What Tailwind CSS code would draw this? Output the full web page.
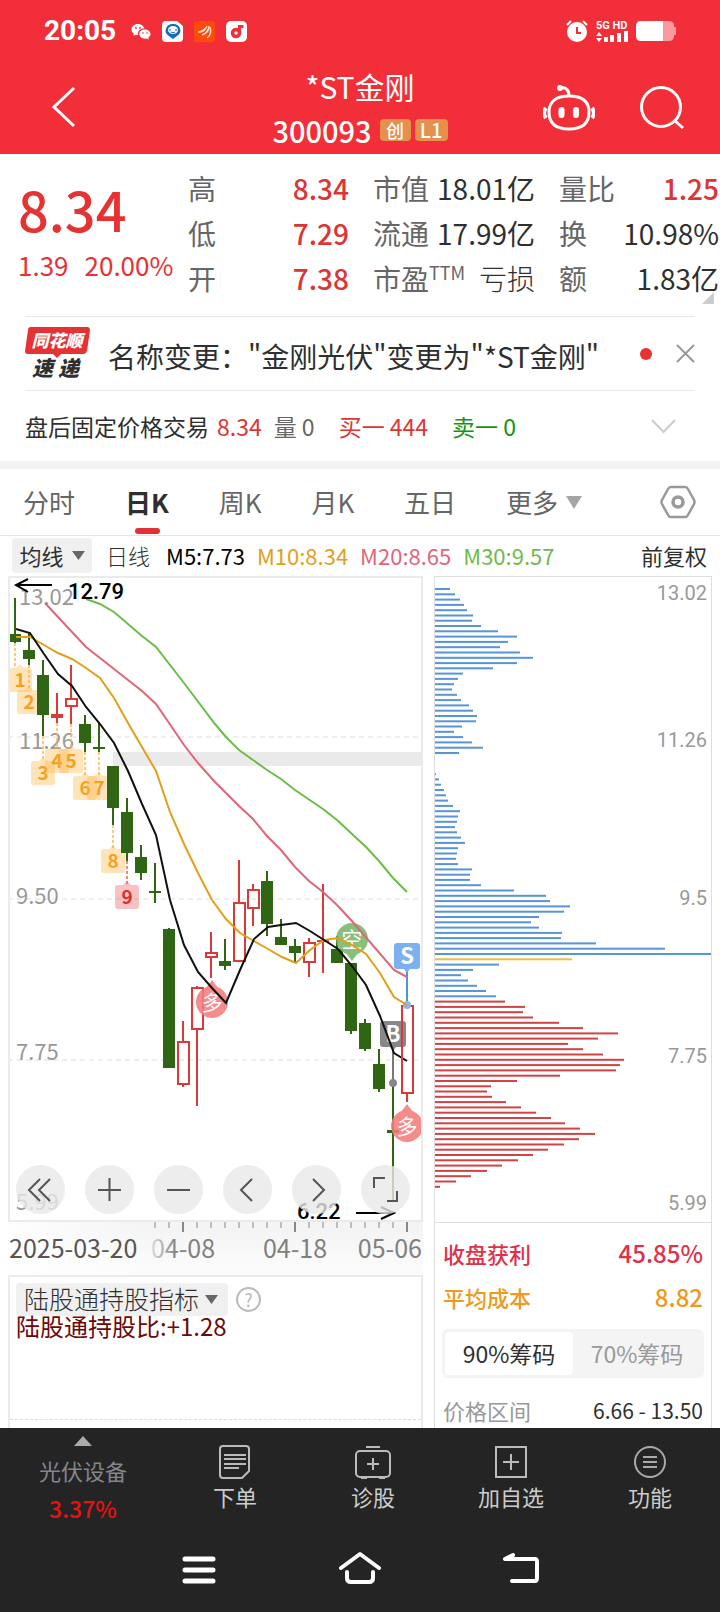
<!DOCTYPE html>
<html lang="zh-CN">

<head>
    <meta charset="UTF-8">
    <meta name="viewport" content="width=device-width, initial-scale=1.0">
    <title>*ST金刚 300093</title>
    <script src="https://cdn.jsdelivr.net/npm/@tailwindcss/browser@4"></script>
</head>

<body class="min-h-screen flex flex-col bg-white text-[#2f2f2f] font-['Noto_Sans_CJK_SC','Noto_Sans',sans-serif]">

    <!-- header -->
    <header class="bg-[#f22f38] text-white">
        <div class="flex items-center justify-between h-[62px] pl-11 pr-11">
            <div class="flex items-center gap-[11px]">
                <span class="text-[28px]/[32px] font-bold font-[Roboto,sans-serif] mr-1">20:05</span>
                <svg class="w-5 h-5" viewBox="0 0 20 20" fill="#fff">
                    <path d="M7 3C3 3 .5 5.500.5 8.500c0 1.800.9 3.200 2.300 4.200L2.300 15l2.400-1.300c.8.200 1.500.3 2.300.3-.8-4 2.700-6.600 6.400-6.400C12.700 5 10 3 7 3z" />
                    <path d="M14 8.500c-3.400 0-5.700 2-5.700 4.600s2.400 4.600 5.700 4.600c.7 0 1.300-.1 1.900-.3l1.900 1-.5-1.700c1.400-.9 2.200-2.200 2.200-3.600 0-2.600-2.500-4.600-5.500-4.600z" />
                    <g fill="#f22f38">
                        <circle cx="5" cy="7" r=".9" />
                        <circle cx="9" cy="7" r=".9" />
                        <circle cx="12" cy="12" r=".8" />
                        <circle cx="16" cy="12" r=".8" />
                    </g>
                </svg>
                <svg class="w-[21px] h-[21px]" viewBox="0 0 21 21">
                    <rect width="21" height="21" rx="4" fill="#fff" />
                    <path d="M15 0h6v5z" fill="#e33a1c" />
                    <path d="M11 3a7 6.500 0 0 0-4 12l4 3 4-3a7 6.500 0 0 0-4-12z" fill="#1269c7" />
                    <ellipse cx="11" cy="9" rx="5" ry="4" fill="#fff" />
                    <path d="M8 8v2M14 8v2M9 11q2 1.500 4 0" stroke="#1269c7" fill="none" />
                </svg>
                <svg class="w-[21px] h-[21px]" viewBox="0 0 21 21">
                    <rect width="21" height="21" rx="3" fill="#ff4b07" />
                    <path d="M4 11c4-1 7-3 9-6-1 4-4 7-9 6zm4 3c4-2 6-5 7-9 1 4-2 8-7 9zm5 3c3-3 4-6 3-11 2 4 1 9-3 11z" fill="#ffe9dc" stroke="#ffe9dc" stroke-width=".8" />
                </svg>
                <svg class="w-[21px] h-[21px]" viewBox="0 0 21 21">
                    <rect width="21" height="21" rx="5" fill="#fff" />
                    <circle cx="10" cy="12" r="3.500" fill="none" stroke="#f22f38" stroke-width="3.500" />
                    <path d="M13.500 12V5.500h4" fill="none" stroke="#f22f38" stroke-width="3" />
                </svg>
            </div>
            <div class="flex items-center gap-2">
                <svg class="w-[22px] h-[22px]" viewBox="0 0 22 22">
                    <circle cx="11" cy="12" r="10" fill="#fff" />
                    <path d="M1 5l4-4M21 5l-4-4" stroke="#fff" stroke-width="2" />
                    <path d="M11 7v6h4" fill="none" stroke="#f22f38" stroke-width="2" />
                </svg>
                <div class="flex flex-col w-8">
                    <span class="text-[11px]/[11px] font-bold font-[Roboto,sans-serif] whitespace-nowrap">5G HD</span>
                    <svg class="w-8 h-[11px]" viewBox="0 0 32 11" fill="#fff">
                        <path d="M0 5l3-4 3 4zM0 7l3 4 3-4zM8 6h4v5H8zM14 4h4v7h-4zM21 2h4v9h-4zM28 0h4v11h-4z" />
                    </svg>
                </div>
                <svg class="w-10 h-5" viewBox="0 0 40 20">
                    <path d="M27 0h6q5 0 5 5v1h2v8h-2v1q0 5-5 5h-6z" fill="#fb9a9e" />
                    <path d="M5 0h22v20H5q-5 0-5-5V5q0-5 5-5z" fill="#fff" />
                </svg>
            </div>
        </div>
        <div class="grid grid-cols-[1fr_auto_1fr] items-center h-[92px] px-9">
            <button aria-label="返回" class="justify-self-start ml-[14px]">
                <svg class="w-7 h-11" viewBox="0 0 28 44" fill="none" stroke="#fff" stroke-width="3">
                    <path d="M24 2L4 21l20 19" />
                </svg>
            </button>
            <div class="flex flex-col items-center">
                <h1 class="text-[30px]/[44px] font-normal">*ST金刚</h1>
                <div class="flex items-center gap-1 h-11 pb-px">
                    <span class="text-[29px]/[40px] font-medium mr-1">300093</span>
                    <span class="w-[31px] h-[22px] bg-[#e5904c] rounded-sm text-center text-[18px]/[22px] font-medium">创</span>
                    <span class="w-[33px] h-[22px] bg-[#e5904c] rounded-sm text-center text-[20px]/[22px] font-medium">L1</span>
                </div>
            </div>
            <div class="flex justify-end gap-[45px]">
                <button aria-label="助手">
                    <svg class="w-[52px] h-12" viewBox="0 0 52 48" fill="none" stroke="#fff" stroke-width="3">
                        <path d="M26 12c13 0 20 5 20 16 0 12-7 17-20 17S6 40 6 28c0-11 8-16 20-16z" />
                        <path d="M18 4c5-1 8 2 8 8" />
                        <circle cx="17" cy="4" r="3" fill="#fff" stroke="none" />
                        <path d="M3 24q-4 5 0 10M49 24q4 5 0 10" stroke-width="4" />
                        <path d="M18.500 26v5M33 26v5" stroke-width="6" stroke-linecap="round" />
                    </svg>
                </button>
                <button aria-label="搜索">
                    <svg class="w-11 h-11" viewBox="0 0 44 44" fill="none" stroke="#fff" stroke-width="3">
                        <circle cx="21" cy="21" r="19.500" />
                        <path d="M34 34l9 8" />
                    </svg>
                </button>
            </div>
        </div>
    </header>

    <!-- quote -->
    <section class="relative grid grid-cols-[146fr_161fr_162fr_160fr] gap-x-6 pl-[18px] pr-px pt-3 pb-[15px] text-[28px]/[45px] whitespace-nowrap">
        <div class="min-w-0 text-[#e63232]">
            <div class="text-[54px]/[86px] font-medium">8.34</div>
            <div class="flex gap-4 text-[26px]/[26px]"><span>1.39</span><span>20.00%</span></div>
        </div>
        <dl>
            <div class="flex justify-between"><dt class="text-[#666]">高</dt><dd class="font-medium text-[#dc3535]">8.34</dd></div>
            <div class="flex justify-between"><dt class="text-[#666]">低</dt><dd class="font-medium text-[#dc3535]">7.29</dd></div>
            <div class="flex justify-between"><dt class="text-[#666]">开</dt><dd class="font-medium text-[#dc3535]">7.38</dd></div>
        </dl>
        <dl>
            <div class="flex justify-between"><dt class="text-[#666]">市值</dt><dd>18.01亿</dd></div>
            <div class="flex justify-between"><dt class="text-[#666]">流通</dt><dd>17.99亿</dd></div>
            <div class="flex justify-between"><dt class="flex text-[#666]">市盈<span class="text-[18px]/[32px]">TTM</span></dt><dd class="font-light">亏损</dd></div>
        </dl>
        <dl>
            <div class="flex justify-between"><dt class="text-[#666]">量比</dt><dd class="font-medium text-[#dc3535]">1.25</dd></div>
            <div class="flex justify-between"><dt class="text-[#666]">换</dt><dd>10.98%</dd></div>
            <div class="flex justify-between"><dt class="text-[#666]">额</dt><dd>1.83亿</dd></div>
        </dl>
        <svg class="absolute right-[6px] bottom-3 w-3 h-3" viewBox="0 0 12 12">
            <path d="M12 0v12H0z" fill="#ccc" />
        </svg>
    </section>

    <!-- news -->
    <section class="flex items-center mx-[25px] h-[75px] border-y border-[#e9e9e9]">
        <svg class="w-[65px] h-[54px]" viewBox="0 0 65 54">
            <path d="M6 0h56q3 0 3 3l-3 21q-1 3-3 3H36l-4 4-4-4H3q-3 0-3-3L3 3q0-3 3-3z" fill="#e63232" />
            <text x="32" y="20" text-anchor="middle" font-size="17" font-weight="900" font-style="italic" fill="#fff">同花顺</text>
            <text x="7" y="49" font-size="21" font-weight="900" font-style="italic" fill="#2f2f2f">速</text>
            <text x="33" y="49" font-size="21" font-weight="900" font-style="italic" fill="#2f2f2f">递</text>
        </svg>
        <a href="#" class="ml-[18px] pt-1 text-[28px]/[40px] whitespace-nowrap">名称变更："金刚光伏"变更为"*ST金刚"</a>
        <span class="ml-auto w-3 h-3 rounded-full bg-[#e63232]"></span>
        <button aria-label="关闭" class="ml-6">
            <svg class="w-[19px] h-[19px]" viewBox="0 0 19 19" stroke="#999" stroke-width="2">
                <path d="M1 1l17 17M18 1L1 18" />
            </svg>
        </button>
    </section>

    <!-- after-hours trading -->
    <section class="flex items-center h-[78px] pl-[25px] pr-11 text-[23px]/[32px] border-b-8 border-[#f3f3f3] whitespace-nowrap">
        <span>盘后固定价格交易</span>
        <span class="ml-2 text-[#dc3535]">8.34</span>
        <span class="ml-3 text-[#666]">量 0</span>
        <span class="ml-6 text-[#dc3535]">买一 444</span>
        <span class="ml-6 text-[#0f960f]">卖一 0</span>
        <button aria-label="展开" class="ml-auto">
            <svg class="w-[25px] h-[15px]" viewBox="0 0 25 15" fill="none" stroke="#ccc" stroke-width="2">
                <path d="M1 1l11.500 12L24 1" />
            </svg>
        </button>
    </section>

    <!-- period tabs -->
    <nav class="flex items-center justify-between h-[67px] pl-[23px] pr-6 border-b border-[#e4e4e4] text-[26px]/[40px] text-[#666]">
        <button>分时</button>
        <button class="relative font-bold text-[#2f2f2f]">日K
            <span class="absolute left-1/2 -ml-3 -bottom-3 w-[25px] h-[6px] rounded-full bg-[#e03236]"></span>
        </button>
        <button>周K</button>
        <button>月K</button>
        <button>五日</button>
        <button class="flex items-center gap-2">更多
            <svg class="w-4 h-[13px]" viewBox="0 0 16 13">
                <path d="M0 0h16L8 13z" fill="#a5a5a5" />
            </svg>
        </button>
        <button aria-label="设置" class="ml-7">
            <svg class="w-9 h-[34px]" viewBox="0 0 36 34" fill="none" stroke="#999" stroke-width="2.500" stroke-linejoin="round">
                <path d="M11 2h14q2 0 3 2l6 11q1 2 0 4l-6 11q-1 2-3 2H11q-2 0-3-2L2 19q-1-2 0-4L8 4q1-2 3-2z" />
                <circle cx="18" cy="17" r="5" stroke-width="3.500" />
            </svg>
        </button>
    </nav>

    <!-- moving averages -->
    <div class="flex items-center h-10 pl-3 pr-[13px] pb-[2px] text-[22px]/[34px] whitespace-nowrap">
        <button class="flex items-center justify-center gap-2 w-20 h-[35px] rounded bg-[#f0f0f0]">均线
            <svg class="w-[13px] h-[9px]" viewBox="0 0 13 9">
                <path d="M0 0h13L6.500 9z" fill="#666" />
            </svg>
        </button>
        <span class="ml-[14px] font-light">日线</span>
        <span class="ml-4 text-black">M5:7.73</span>
        <span class="ml-3 text-[#e0a01c]">M10:8.34</span>
        <span class="ml-3 text-[#e0667a]">M20:8.65</span>
        <span class="ml-3 text-[#6cbc4b]">M30:9.57</span>
        <span class="ml-auto">前复权</span>
    </div>

    <main class="grow grid grid-cols-[415fr_278fr] gap-x-[11px] px-2">
        <!-- k line -->
        <div class="flex flex-col">
            <div class="relative">
                <svg id="kline" class="block w-full" viewBox="0 0 415 646" fill="none"></svg>
                <div class="absolute left-2 bottom-2 flex gap-5">
                    <button aria-label="收起" class="w-[49px] h-[49px] rounded-full bg-[#e8e8e8]/80">
                        <svg viewBox="0 0 49 49" fill="none" stroke="#555" stroke-width="2"><path d="M24 14L13 25l11 11M34 14L23 25l11 11" /></svg>
                    </button>
                    <button aria-label="放大" class="w-[49px] h-[49px] rounded-full bg-[#e8e8e8]/80">
                        <svg viewBox="0 0 49 49" fill="none" stroke="#555" stroke-width="2"><path d="M13 25h23M24.500 13v23" /></svg>
                    </button>
                    <button aria-label="缩小" class="w-[49px] h-[49px] rounded-full bg-[#e8e8e8]/80">
                        <svg viewBox="0 0 49 49" fill="none" stroke="#555" stroke-width="2"><path d="M13 25h23" /></svg>
                    </button>
                    <button aria-label="左移" class="w-[49px] h-[49px] rounded-full bg-[#e8e8e8]/80">
                        <svg viewBox="0 0 49 49" fill="none" stroke="#555" stroke-width="2"><path d="M29 14L18 25l11 11" /></svg>
                    </button>
                    <button aria-label="右移" class="w-[49px] h-[49px] rounded-full bg-[#e8e8e8]/80">
                        <svg viewBox="0 0 49 49" fill="none" stroke="#555" stroke-width="2"><path d="M21 14l11 11-11 11" /></svg>
                    </button>
                    <button aria-label="全屏" class="w-[49px] h-[49px] rounded-full bg-[#e8e8e8]/80">
                        <svg viewBox="0 0 49 49" fill="none" stroke="#555" stroke-width="2"><path d="M13 23V13h11M36 26v10H26" /></svg>
                    </button>
                </div>
            </div>
            <svg id="axis" class="block w-full" viewBox="0 0 415 53"></svg>
            <div class="grow flex flex-col border-2 border-b-0 border-[#ebebeb]">
                <div class="flex items-center gap-2 mt-[6px] ml-[6px]">
                    <button class="flex items-center gap-[6px] h-[33px] pl-2 pr-[10px] pb-1 rounded bg-[#f0f0f0] text-[25px]/[30px] font-light">陆股通持股指标
                        <svg class="w-[13px] h-[9px] mt-1" viewBox="0 0 13 9">
                            <path d="M0 0h13L6.500 9z" fill="#666" />
                        </svg>
                    </button>
                    <button class="w-[25px] h-[25px] rounded-full border-2 border-[#bbb] text-[18px]/[21px] text-[#bbb]">?</button>
                </div>
                <div class="ml-[6px] text-[24px]/[24px] -mt-[2px] text-[#6d0808]">陆股通持股比:+1.28</div>
                <div class="mt-auto mb-2 border-t border-dashed border-[#ddd]"></div>
            </div>
        </div>

        <!-- chip distribution -->
        <div class="border border-[#dedede] border-b-0 flex flex-col">
            <svg id="chips" class="block w-full" viewBox="0 0 276 645"></svg>
            <dl class="px-2 pt-2 border-t border-[#dedede] text-[22px]/[44px] font-medium">
                <div class="flex justify-between text-[#e0314a]"><dt>收盘获利</dt><dd class="text-[24px]">45.85%</dd></div>
                <div class="flex justify-between text-[#ee9a1a]"><dt>平均成本</dt><dd class="text-[24px]">8.82</dd></div>
            </dl>
            <div class="mx-[7px] mt-[10px] grid grid-cols-2 p-[3px] rounded-md bg-[#f4f4f4] text-[23px]/[43px]">
                <button class="rounded bg-white">90%筹码</button>
                <button class="text-[#999]">70%筹码</button>
            </div>
            <div class="flex justify-between mx-2 mt-4 text-[22px]/[32px]"><span class="text-[#999]">价格区间</span><span class="text-[21px]">6.66 - 13.50</span></div>
        </div>
    </main>

    <!-- bottom bar -->
    <footer class="bg-[#242424]">
        <div class="grid grid-cols-[166fr_138fr_138fr_138fr_140fr] h-[100px] text-[22px]/[32px] text-[#ccc]">
            <button class="flex flex-col items-center pt-2 text-[#85858f]">
                <svg class="w-[18px] h-[10px]" viewBox="0 0 18 10">
                    <path d="M9 0l9 10H0z" fill="#aaa" />
                </svg>
                <span class="mt-2">光伏设备</span>
                <span class="mt-[6px] text-[23px] font-medium text-[#e61212]">3.37%</span>
            </button>
            <button class="flex flex-col items-center pt-4">
                <svg class="w-9 h-9" viewBox="0 0 36 36" fill="none" stroke="#bbb" stroke-width="2">
                    <path d="M6 2h23q3 0 3 3v22l-7 7H6q-3 0-3-3V5q0-3 3-3z" />
                    <path d="M7 11h22M7 15h22M7 20h22M7 24h15" />
                </svg>
                <span>下单</span>
            </button>
            <button class="flex flex-col items-center pt-4">
                <svg class="w-9 h-9" viewBox="0 0 36 36" fill="none" stroke="#bbb" stroke-width="2">
                    <rect x="1" y="7" width="34" height="26" rx="4" />
                    <path d="M11 3h14M18 14v12M12 20h12M6 34h6M24 34h6" />
                </svg>
                <span>诊股</span>
            </button>
            <button class="flex flex-col items-center pt-4">
                <svg class="w-9 h-9" viewBox="0 0 36 36" fill="none" stroke="#bbb" stroke-width="2">
                    <path d="M3 3h30v30H3zM18 10v16M10 18h16" />
                </svg>
                <span>加自选</span>
            </button>
            <button class="flex flex-col items-center pt-4">
                <svg class="w-9 h-9" viewBox="0 0 36 36" fill="none" stroke="#aaa" stroke-width="2">
                    <circle cx="18" cy="18" r="15" />
                    <path d="M11 13h14M11 18h14M11 23h14" />
                </svg>
                <span>功能</span>
            </button>
        </div>
        <div class="flex justify-center gap-[120px] h-[84px] pt-5">
            <button aria-label="菜单" class="h-11">
                <svg class="w-10 h-11" viewBox="0 0 40 44" stroke="#fff" stroke-width="5" stroke-linecap="round">
                    <path d="M6 11h28M6 22h28M6 33h28" />
                </svg>
            </button>
            <button aria-label="主页" class="h-11">
                <svg class="w-[42px] h-11" viewBox="0 0 42 44" fill="none" stroke="#fff" stroke-width="4" stroke-linecap="round" stroke-linejoin="round">
                    <path d="M2 20L21 6l19 14" />
                    <path d="M8 24v6q0 4 4 4h18q4 0 4-4v-6" />
                </svg>
            </button>
            <button aria-label="后退" class="h-11">
                <svg class="w-10 h-11" viewBox="0 0 40 44" fill="none" stroke="#fff" stroke-width="4" stroke-linecap="round" stroke-linejoin="round">
                    <path d="M12 7L4 11h30q2 0 2 3v16q0 3-2 3H11" />
                </svg>
            </button>
        </div>
    </footer>

    <script>
        // [high, body top, body bottom, low, type]  g = down, r = up, f = up filled
        const candles = [
            [22, 58, 66, 67, 'g'], [57, 74, 83, 89, 'g'], [84, 99, 139, 160, 'g'], [117, 138, 142, 147, 'f'],
            [89, 123, 130, 148, 'r'], [139, 148, 167, 176, 'g'], [146, 171, 173, 176, 'g'], [190, 190, 232, 249, 'g'],
            [222, 236, 277, 285, 'g'], [269, 281, 297, 304, 'g'], [287, 315, 317, 327, 'g'], [352, 353, 492, 492, 'g'],
            [445, 466, 508, 511, 'r'], [410, 412, 453, 530, 'r'], [356, 377, 381, 402, 'r'], [363, 385, 390, 394, 'g'],
            [284, 327, 385, 386, 'r'], [308, 314, 332, 350, 'r'], [295, 305, 348, 360, 'g'], [343, 361, 369, 369, 'g'],
            [363, 370, 377, 386, 'g'], [362, 367, 386, 401, 'r'], [308, 364, 366, 397, 'f'], [360, 373, 387, 387, 'g'],
            [387, 387, 455, 458, 'g'], [443, 447, 473, 475, 'g'], [473, 488, 513, 516, 'g'], [508, 554, 557, 624, 'g'],
            [429, 430, 517, 526, 'r']
        ];
        const averages = {
            '#6cbc4b': '78,23 92,28 106,36 134,60 148,71 176,107 207,148 218,161 231,174 245,184 259,194 273,203 287,214 315,233 329,244 343,257 359,272 371,285 385,302 399,316',
            '#e0667a': '37,27 64,56 78,71 92,82 134,115 148,128 176,169 190,187 207,206 218,217 231,230 245,243 259,260 273,274 287,291 301,305 315,316 329,329 343,344 386,394 399,401',
            '#e0a01c': '8,61 22,61 36,69 50,77 64,83 78,92 92,102 106,122 120,147 134,171 148,195 162,236 176,268 190,297 204,324 218,343 232,357 246,365 260,373 274,381 288,387 302,374 316,364 330,362 344,369 358,378 372,397 386,421 399,429',
            '#111': '8,53 22,57 36,78 50,98 64,110 78,131 92,148 106,167 120,195 134,228 148,259 162,324 176,369 190,396 204,412 218,427 232,394 246,363 260,351 273,349 288,347 302,355 316,364 330,373 344,390 358,409 372,440 386,477 399,485'
        };
        // [number, badge x, badge top, stem x, stem start]
        const marks = [
            [1, 12, 91, 7, 67], [2, 21, 113, 21, 89], [3, 35, 184, 35, 160], [4, 49, 172, 49, 147], [5, 63, 172, 63, 148],
            [6, 77, 199, 77, 176], [7, 91, 199, 91, 176], [8, 105, 272, 105, 249], [9, 119, 308, 119, 285]
        ];

        let k = '<rect x="105" y="176" width="310" height="14" fill="#eaeaea"/>';
        [161, 323, 484].forEach(y => k += `<path d="M0 ${y}H413" stroke="#ddd" stroke-dasharray="5 4"/>`);
        [['13.02', 29, 11], ['11.26', 173, 11], ['9.50', 328, 8], ['7.75', 484, 8], ['5.99', 634, 8]].forEach(([t, y, x]) => {
            k += `<text x="${x}" y="${y}" font-size="22" fill="#999">${t}</text>`;
        });
        // sequence badges
        marks.forEach(([n, x, y, sx, sy]) => {
            const bg = n === 9 ? '#e8565a' : '#ffb23e';
            const fg = n === 9 ? '#dc2f2f' : '#f5a11f';
            k += `<path d="M${sx} ${sy}V${y}" stroke="${bg}" stroke-opacity=".7" stroke-width="2" stroke-dasharray="3 2"/>`;
            k += `<path d="M${x - 9} ${y + 1}h5l4-4 4 4h5q3 0 3 3v18q0 3-3 3h-18q-3 0-3-3v-18q0-3 3-3z" fill="${bg}" fill-opacity=".36"/>`;
            k += `<text x="${x}" y="${y + 20}" font-size="19" font-weight="700" text-anchor="middle" fill="${fg}">${n}</text>`;
        });
        candles.forEach(([h, t, b, l, c], i) => {
            const x = 7 + 14 * i;
            const color = c === 'g' ? '#2f6513' : '#d93a3a';
            k += `<path d="M${x} ${h}V${t}M${x} ${b}V${l}" stroke="${color}" stroke-width="2"/>`;
            k += c === 'r'
                ? `<rect x="${x - 5}" y="${t}" width="11" height="${b - t}" stroke="${color}" stroke-width="2"/>`
                : `<rect x="${x - 6}" y="${t}" width="12" height="${b - t}" fill="${color}"/>`;
        });
        // long / short markers
        [['多', 204, 426, '#f47c7c', -1], ['多', 399, 550, '#f47c7c', -1], ['空', 344, 363, '#78b869', 1]].forEach(([t, x, y, c, d]) => {
            k += `<g opacity=".88"><circle cx="${x}" cy="${y}" r="16" fill="${c}"/><path d="M${x - 6} ${y + d * 14}L${x} ${y + d * 22}L${x + 6} ${y + d * 14}z" fill="${c}"/></g>`;
            k += `<text x="${x}" y="${y + 8}" font-size="21" text-anchor="middle" fill="#fff">${t}</text>`;
        });
        k += '<path d="M372 448q0-3 3-3h20q3 0 3 3v20q0 3-3 3h-7l-3 4-3-4h-7q-3 0-3-3z" fill="#888"/><path d="M385 474V507" stroke="#777" stroke-width="2"/><circle cx="385" cy="507" r="4" fill="#888"/>';
        k += '<text x="385" y="466" font-size="22" font-weight="700" text-anchor="middle" fill="#fff">B</text>';
        k += '<path d="M386 370q0-3 3-3h20q3 0 3 3v20q0 3-3 3h-7l-3 4-3-4h-7q-3 0-3-3z" fill="#7cb0ee"/><path d="M399 396V428" stroke="#4f94e0" stroke-width="2"/><circle cx="399" cy="429" r="4" fill="#8ab8ee"/>';
        k += '<text x="399" y="388" font-size="22" font-weight="700" text-anchor="middle" fill="#fff">S</text>';
        Object.entries(averages).forEach(([c, p]) => k += `<polyline points="${p}" stroke="${c}" stroke-width="2"/>`);
        k += '<path d="M394 430V517" stroke="#d93a3a" stroke-width="2"/>';
        k += '<path d="M44 9H8M20 3L8 9l12 7M348 637H386M373 631l13 6-13 6" stroke="#000" stroke-width="2"/>';
        k += '<g fill="#000" font-family="Roboto, sans-serif" font-size="22" font-weight="500"><text x="60" y="23">12.79</text><text x="289" y="643">6.22</text></g>';
        k += '<rect x="1" y="1" width="413" height="644" stroke="#ebebeb" stroke-width="2"/>';
        document.getElementById('kline').innerHTML = k;

        // date axis, first label of the row fades in from the left
        let a = '<defs><linearGradient id="bg" x2="0" y2="1"><stop stop-color="#f3f3f3"/><stop offset="1" stop-color="#fcfcfc"/></linearGradient>'
            + '<linearGradient id="veil"><stop stop-color="#fff" stop-opacity=".9"/><stop offset="1" stop-color="#fff" stop-opacity="0"/></linearGradient>'
            + '<linearGradient id="fade"><stop stop-color="#ddd"/><stop offset=".4" stop-color="#808080"/></linearGradient></defs>'
            + '<rect width="415" height="53" fill="url(#bg)"/><rect width="150" height="53" fill="url(#veil)"/>';
        for (let i = 10; i <= 28; i++) {
            const major = i === 12 || i === 20 || i === 28;
            a += `<path d="M${7 + 14 * i} 0v${major ? 10 : 6}" stroke="#888" stroke-width="${major ? 2 : 1}"/>`;
        }
        a += '<g font-size="25"><text x="1" y="36" fill="#555">2025-03-20</text><text x="175" y="36" text-anchor="middle" fill="url(#fade)">04-08</text>'
            + '<g fill="#808080"><text x="287" y="36" text-anchor="middle">04-18</text><text x="414" y="36" text-anchor="end">05-06</text></g></g>';
        document.getElementById('axis').innerHTML = a;

        // chip bars, top price to bottom price
        const chips = [15, 20, 25, 29, 32, 38, 37, 46, 63, 82, 73, 65, 85, 98, 82, 58, 28, 23, 19, 17, 22, 26, 34, 38, 42, 41, 27, 19, 28, 37, 48, 24,
            0, 0, 0, 1, 4, 6, 9, 11, 13, 18, 25, 23, 22, 20, 22, 26, 30, 23, 22, 21, 23, 37, 35, 35, 46, 79, 111, 115, 135, 129, 104, 96, 104, 127, 126,
            161, 230, 276, 137, 64, 38, 26, 33, 42, 51, 61, 70, 90, 88, 98, 124, 148, 183, 163, 133, 148, 168, 189, 185, 181, 125, 82, 56, 52, 57, 71,
            86, 101, 116, 130, 145, 160, 144, 129, 113, 98, 83, 67, 52, 36, 21, 5];
        let c = '';
        chips.forEach((w, i) => {
            const color = i === 70 ? '#f0bd45' : i < 78 ? '#5795d6' : '#cf4444';
            c += `<rect y="${(11 + i * 5.29).toFixed(1)}" width="${w}" height="2" fill="${color}"/>`;
        });
        [['13.02', 23], ['11.26', 170], ['9.5', 328], ['7.75', 486], ['5.99', 633]].forEach(([t, y]) => {
            c += `<text x="272" y="${y}" text-anchor="end" font-family="Roboto, sans-serif" font-size="20" fill="#999">${t}</text>`;
        });
        document.getElementById('chips').innerHTML = c;
    </script>
</body>

</html>
